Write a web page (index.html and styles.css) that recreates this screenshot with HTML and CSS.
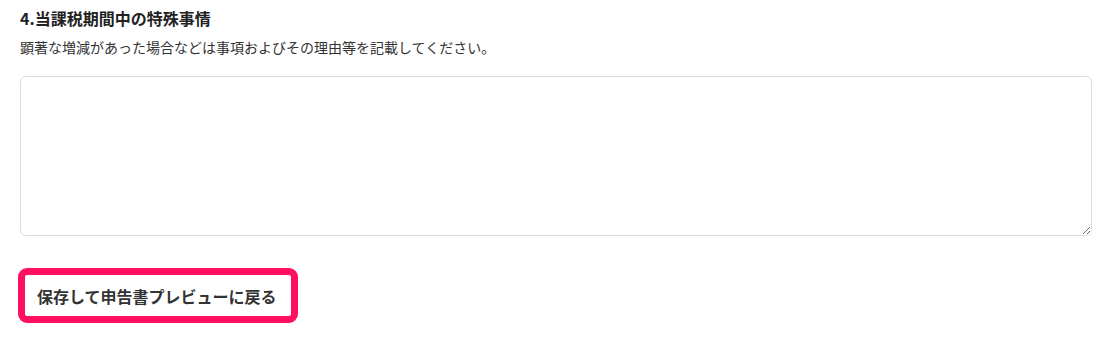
FILE: index.html
```html
<!DOCTYPE html>
<html lang="ja">
<head>
<meta charset="utf-8">
<link rel="stylesheet" href="styles.css">
</head>
<body>
<div class="section">
  <h2 class="title">4.当課税期間中の特殊事情</h2>
  <p class="note">顕著な増減があった場合などは事項およびその理由等を記載してください。</p>
  <textarea class="field"></textarea>
  <div class="actions">
    <button class="btn">保存して申告書プレビューに戻る</button>
  </div>
</div>
</body>
</html>
```

FILE: styles.css
```css
html, body {
  margin: 0;
  padding: 0;
  background: #fff;
}
body {
  font-family: "Noto Sans CJK JP", "Noto Sans", sans-serif;
  color: #333;
}
.section {
  padding: 7px 17px 0 20px;
}
.title {
  margin: 0;
  font-size: 16px;
  line-height: 22px;
  font-weight: 700;
  color: #222;
}
.note {
  margin: 8px 0 0;
  font-size: 14px;
  line-height: 20px;
  color: #333;
}
.field {
  display: block;
  box-sizing: border-box;
  width: 1072px;
  height: 160px;
  margin-top: 19px;
  border: 1px solid #dcdcdc;
  border-radius: 6px;
  resize: vertical;
  outline: none;
  font-family: inherit;
}
.actions {
  margin-top: 32px;
  margin-left: -2px;
}
.btn {
  box-sizing: border-box;
  height: 55px;
  width: 280px;
  padding: 0 14px 0 12px;
  border: 7px solid #ff1060;
  border-radius: 9px;
  background: #fff;
  font-family: inherit;
  font-size: 16px;
  font-weight: 700;
  color: #333;
  text-align: left;
  cursor: pointer;
}
```
